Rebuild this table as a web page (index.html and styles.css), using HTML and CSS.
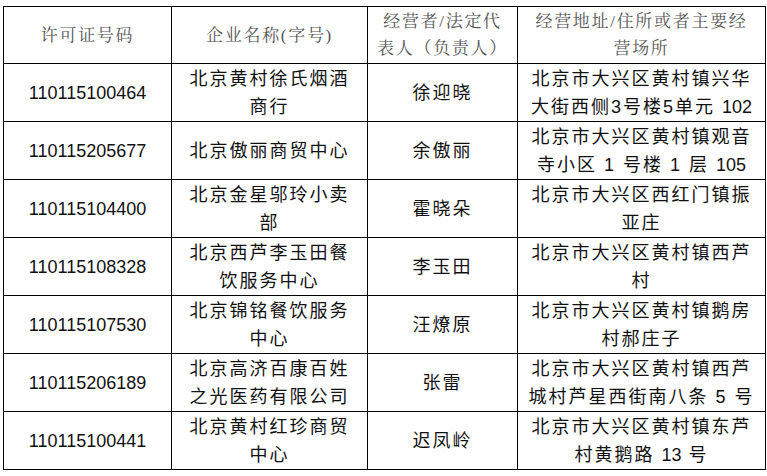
FILE: index.html
```html
<!DOCTYPE html>
<html lang="zh-CN">
<head>
<meta charset="utf-8">
<link rel="stylesheet" href="styles.css">
<title>许可证</title>
</head>
<body>
<table class="grid">
  <colgroup>
    <col class="c1"><col class="c2"><col class="c3"><col class="c4">
  </colgroup>
  <thead>
    <tr class="head">
      <th>许可证号码</th>
      <th>企业名称(字号)</th>
      <th>经营者/法定代<br>表人（负责人）</th>
      <th>经营地址/住所或者主要经<br>营场所</th>
    </tr>
  </thead>
  <tbody>
    <tr><td class="num">110115100464</td><td>北京黄村徐氏烟酒<br>商行</td><td>徐迎晓</td><td>北京市大兴区黄村镇兴华<br>大街西侧3号楼5单元 <span class="d">102</span></td></tr>
    <tr><td class="num">110115205677</td><td>北京傲丽商贸中心</td><td>余傲丽</td><td>北京市大兴区黄村镇观音<br>寺小区 1 号楼 1 层 <span class="d">105</span></td></tr>
    <tr><td class="num">110115104400</td><td>北京金星邬玲小卖<br>部</td><td>霍晓朵</td><td>北京市大兴区西红门镇振<br>亚庄</td></tr>
    <tr><td class="num">110115108328</td><td>北京西芦李玉田餐<br>饮服务中心</td><td>李玉田</td><td>北京市大兴区黄村镇西芦<br>村</td></tr>
    <tr><td class="num">110115107530</td><td>北京锦铭餐饮服务<br>中心</td><td>汪燎原</td><td>北京市大兴区黄村镇鹅房<br>村郝庄子</td></tr>
    <tr><td class="num">110115206189</td><td>北京高济百康百姓<br>之光医药有限公司</td><td>张雷</td><td>北京市大兴区黄村镇西芦<br>城村芦星西街南八条 5 号</td></tr>
    <tr><td class="num">110115100441</td><td>北京黄村红珍商贸<br>中心</td><td>迟凤岭</td><td>北京市大兴区黄村镇东芦<br>村黄鹅路 <span class="d">13</span> 号</td></tr>
  </tbody>
</table>
</body>
</html>
```

FILE: styles.css
```css
html, body {
  margin: 0;
  padding: 0;
  background: #fff;
}
body {
  padding: 6px 0 0 3px;
}
.grid {
  border-collapse: collapse;
  table-layout: fixed;
  width: 762px;
  font-family: "Liberation Sans", "Noto Sans CJK SC", sans-serif;
  color: #111;
}
.c1 { width: 168px; }
.c2 { width: 196px; }
.c3 { width: 150px; }
.c4 { width: 248px; }
.grid th, .grid td {
  border: 1px solid #000;
  padding: 0;
  text-align: center;
  vertical-align: middle;
  white-space: nowrap;
}
.head {
  height: 57px;
}
.head th {
  font-family: "Liberation Serif", "Noto Serif CJK SC", "Noto Sans CJK SC", serif;
  font-weight: normal;
  font-size: 17px;
  line-height: 27px;
  letter-spacing: 1.7px;
  color: #555;
}
tbody tr {
  height: 58px;
}
tbody td {
  font-size: 18px;
  line-height: 28px;
  letter-spacing: 2px;
}
tbody td.num,
.d {
  letter-spacing: 0;
}
```
